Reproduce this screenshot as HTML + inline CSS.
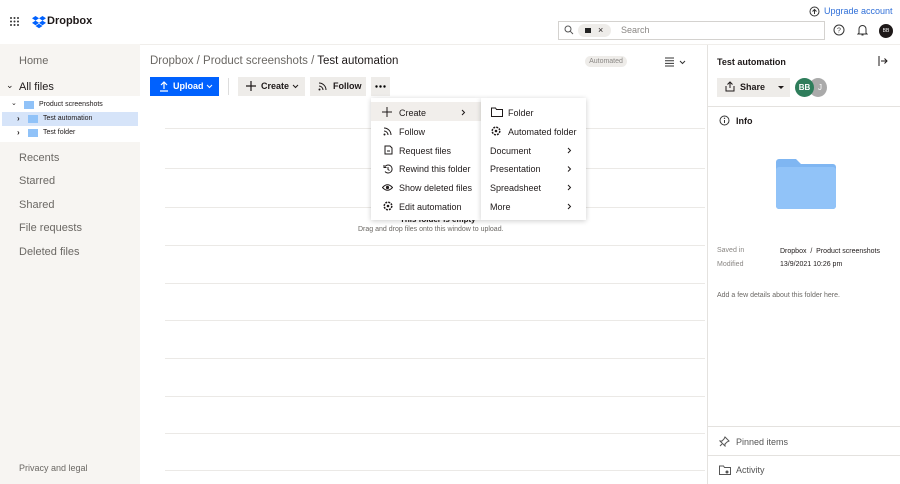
<!DOCTYPE html>
<html><head><meta charset="utf-8"><style>
*{box-sizing:border-box;margin:0;padding:0}
body{width:900px;height:484px;overflow:hidden;background:#fff;font-family:"Liberation Sans",sans-serif;color:#1e1919;position:relative}
.a{position:absolute}
.t{position:absolute;white-space:nowrap}
.line{position:absolute;left:165px;width:540px;height:1px;background:#ebe9e6}
.mi{position:absolute;font-size:9px;color:#1e1919;white-space:nowrap}
svg{position:absolute}
</style></head><body>
<!-- top bar -->
<svg style="left:10px;top:17px" width="9" height="9"><g fill="#333"><circle cx="1" cy="1" r="1"/><circle cx="4.5" cy="1" r="1"/><circle cx="8" cy="1" r="1"/><circle cx="1" cy="4.5" r="1"/><circle cx="4.5" cy="4.5" r="1"/><circle cx="8" cy="4.5" r="1"/><circle cx="1" cy="8" r="1"/><circle cx="4.5" cy="8" r="1"/><circle cx="8" cy="8" r="1"/></g></svg>
<svg style="left:32px;top:16px" width="14" height="13" viewBox="0 0 14 13"><path d="M3.5 0L0 2.3l3.5 2.3L7 2.3zM10.5 0L7 2.3l3.5 2.3L14 2.3zM0 6.9l3.5 2.3L7 6.9 3.5 4.6zM10.5 4.6L7 6.9l3.5 2.3L14 6.9zM3.5 10L7 12.3l3.5-2.3L7 7.7z" fill="#0061fe"/></svg>
<div class="t" style="left:47px;top:15px;font-size:11px;font-weight:bold">Dropbox</div>
<svg style="left:809px;top:6px" width="11" height="11"><circle cx="5.5" cy="5.5" r="4.5" fill="none" stroke="#333"/><path d="M5.5 8V3.5M3.5 5.5l2-2 2 2" fill="none" stroke="#333"/></svg>
<div class="t" style="left:824px;top:6px;font-size:9px;color:#2f6fd8">Upgrade account</div>
<div class="a" style="left:558px;top:21px;width:267px;height:19px;border:1px solid #d4d2cf"></div>
<svg style="left:564px;top:25px" width="10" height="10"><circle cx="4" cy="4" r="3" fill="none" stroke="#555"/><path d="M6.3 6.3L9 9" stroke="#555"/></svg>
<div class="a" style="left:578px;top:24px;width:33px;height:13px;border-radius:7px;background:#eeece9"></div>
<div class="a" style="left:585px;top:28px;width:6px;height:5px;background:#222"></div>
<div class="t" style="left:598px;top:25px;font-size:9px">×</div>
<div class="t" style="left:621px;top:25px;font-size:9px;color:#8a8784">Search</div>
<svg style="left:833px;top:24px" width="12" height="12"><circle cx="6" cy="6" r="5" fill="none" stroke="#333"/><text x="6" y="8.5" font-size="7" text-anchor="middle" font-family="Liberation Sans" fill="#333">?</text></svg>
<svg style="left:857px;top:24px" width="11" height="12"><path d="M2 9V5a3.5 3.5 0 0 1 7 0v4l1 1H1zM4.5 11h2" fill="none" stroke="#333"/></svg>
<div class="a" style="left:879px;top:24px;width:14px;height:14px;border-radius:50%;background:#1e1919;color:#fff;font-size:5px;text-align:center;line-height:14px">BB</div>
<!-- sidebar -->
<div class="a" style="left:0;top:44px;width:140px;height:440px;background:#f7f5f2"></div>
<div class="t" style="left:19px;top:55px;font-size:11px;color:#6b6864">Home</div>
<div class="t" style="left:6px;top:80px;font-size:9px">⌄</div>
<div class="t" style="left:19px;top:81px;font-size:11px">All files</div>
<div class="a" style="left:0;top:96px;width:140px;height:46px;background:#fff"></div>
<div class="a" style="left:2px;top:112px;width:136px;height:14px;background:#d6e4f9"></div>
<div class="t" style="left:11px;top:99px;font-size:7px">⌄</div>
<div class="a" style="left:24px;top:101px;width:10px;height:8px;background:#90c2f8"></div>
<div class="t" style="left:39px;top:101px;font-size:7px">Product screenshots</div>
<div class="t" style="left:17px;top:114px;font-size:8px;font-weight:bold">›</div>
<div class="a" style="left:28px;top:115px;width:10px;height:8px;background:#90c2f8"></div>
<div class="t" style="left:43px;top:115px;font-size:7px">Test automation</div>
<div class="t" style="left:17px;top:128px;font-size:8px;font-weight:bold">›</div>
<div class="a" style="left:28px;top:129px;width:10px;height:8px;background:#90c2f8"></div>
<div class="t" style="left:43px;top:129px;font-size:7px">Test folder</div>
<div class="t" style="left:19px;top:152px;font-size:11px;color:#6b6864">Recents</div>
<div class="t" style="left:19px;top:175px;font-size:11px;color:#6b6864">Starred</div>
<div class="t" style="left:19px;top:199px;font-size:11px;color:#6b6864">Shared</div>
<div class="t" style="left:19px;top:222px;font-size:11px;color:#6b6864">File requests</div>
<div class="t" style="left:19px;top:246px;font-size:11px;color:#6b6864">Deleted files</div>
<div class="t" style="left:19px;top:463px;font-size:9px;color:#6b6864">Privacy and legal</div>
<!-- main -->
<div class="t" style="left:150px;top:55px;font-size:11.5px;color:#6b6864">Dropbox / Product screenshots / <span style="color:#1e1919">Test automation</span></div>
<div class="a" style="left:585px;top:56px;width:42px;height:11px;border-radius:6px;background:#eeece9;font-size:7px;color:#8a8784;text-align:center;line-height:11px">Automated</div>
<svg style="left:665px;top:57px" width="22" height="10"><path d="M0 1h9M0 3.7h9M0 6.4h9M0 9h9M15 4l2.5 2.5L20 4" fill="none" stroke="#333"/></svg>
<div class="a" style="left:150px;top:77px;width:69px;height:19px;background:#0061fe"></div>
<svg style="left:159px;top:81px" width="10" height="11"><path d="M5 8V1M2 4l3-3 3 3M1 10h8" fill="none" stroke="#fff" stroke-width="1.2"/></svg>
<div class="t" style="left:173px;top:81px;font-size:9px;font-weight:bold;color:#fff">Upload</div>
<svg style="left:206px;top:84px" width="7" height="5"><path d="M1 1l2.5 2.5L6 1" fill="none" stroke="#fff"/></svg>
<div class="a" style="left:228px;top:78px;width:1px;height:17px;background:#ddd"></div>
<div class="a" style="left:238px;top:77px;width:67px;height:19px;background:#eeece9"></div>
<svg style="left:246px;top:81px" width="10" height="10"><path d="M5 0v10M0 5h10" stroke="#1e1919" stroke-width="1.2"/></svg>
<div class="t" style="left:261px;top:81px;font-size:9px;font-weight:bold">Create</div>
<svg style="left:292px;top:84px" width="7" height="5"><path d="M1 1l2.5 2.5L6 1" fill="none" stroke="#1e1919"/></svg>
<div class="a" style="left:310px;top:77px;width:56px;height:19px;background:#eeece9"></div>
<svg style="left:318px;top:82px" width="9" height="9"><path d="M1 1a7 7 0 0 1 7 7M1 4a4 4 0 0 1 4 4" fill="none" stroke="#1e1919"/><circle cx="1.5" cy="7.5" r="1" fill="#1e1919"/></svg>
<div class="t" style="left:333px;top:81px;font-size:9px;font-weight:bold">Follow</div>
<div class="a" style="left:371px;top:77px;width:19px;height:19px;background:#eeece9"></div>
<svg style="left:375px;top:85px" width="11" height="3"><circle cx="1.5" cy="1.5" r="1.2"/><circle cx="5.5" cy="1.5" r="1.2"/><circle cx="9.5" cy="1.5" r="1.2"/></svg>
<div class="line" style="top:128px"></div><div class="line" style="top:168px"></div><div class="line" style="top:207px"></div>
<div class="line" style="top:245px"></div><div class="line" style="top:283px"></div><div class="line" style="top:320px"></div>
<div class="line" style="top:358px"></div><div class="line" style="top:396px"></div><div class="line" style="top:433px"></div><div class="line" style="top:470px"></div>
<div class="t" style="left:400px;top:215px;font-size:8px;font-weight:bold">This folder is empty</div>
<div class="t" style="left:358px;top:226px;font-size:7px;color:#6b6864">Drag and drop files onto this window to upload.</div>
<!-- menus -->
<div class="a" style="left:371px;top:98px;width:110px;height:122px;background:#fff;box-shadow:0 1px 5px rgba(0,0,0,.2)"></div>
<div class="a" style="left:371px;top:102px;width:110px;height:19px;background:#f1eeeb"></div>
<div class="a" style="left:481px;top:98px;width:105px;height:122px;background:#fff;box-shadow:0 1px 5px rgba(0,0,0,.2)"></div>
<svg style="left:382px;top:107px" width="10" height="10"><path d="M5 0v10M0 5h10" stroke="#1e1919"/></svg>
<div class="mi" style="left:399px;top:108px">Create</div>
<svg style="left:461px;top:109px" width="5" height="7"><path d="M1 1l2.5 2.5L1 6" fill="none" stroke="#1e1919"/></svg>
<svg style="left:383px;top:127px" width="9" height="9"><path d="M1 1a7 7 0 0 1 7 7M1 4a4 4 0 0 1 4 4" fill="none" stroke="#1e1919"/><circle cx="1.5" cy="7.5" r="1" fill="#1e1919"/></svg>
<div class="mi" style="left:399px;top:127px">Follow</div>
<svg style="left:384px;top:145px" width="9" height="10"><path d="M1 1h5l2 2v6H1z" fill="none" stroke="#1e1919"/><path d="M3 6h3" stroke="#1e1919"/></svg>
<div class="mi" style="left:399px;top:146px">Request files</div>
<svg style="left:383px;top:164px" width="10" height="10"><path d="M2 2.5A4 4 0 1 1 2 7.5M1 1v2.5h2.5M5 3v2.5l1.5 1" fill="none" stroke="#1e1919"/></svg>
<div class="mi" style="left:399px;top:164px">Rewind this folder</div>
<svg style="left:382px;top:184px" width="11" height="7"><path d="M0.5 3.5Q5.5-2 10.5 3.5Q5.5 9 0.5 3.5z" fill="none" stroke="#1e1919"/><circle cx="5.5" cy="3.5" r="1.6" fill="#1e1919"/></svg>
<div class="mi" style="left:399px;top:183px">Show deleted files</div>
<svg style="left:383px;top:201px" width="10" height="10"><circle cx="5" cy="5" r="3.8" fill="none" stroke="#1e1919" stroke-width="1.5" stroke-dasharray="2 1"/><circle cx="5" cy="5" r="1.3" fill="#1e1919"/></svg>
<div class="mi" style="left:399px;top:202px">Edit automation</div>
<svg style="left:491px;top:107px" width="12" height="10"><path d="M0.5 1h4l1 1.5h6v7h-11z" fill="none" stroke="#1e1919"/></svg>
<div class="mi" style="left:508px;top:108px">Folder</div>
<svg style="left:491px;top:126px" width="10" height="10"><circle cx="5" cy="5" r="3.8" fill="none" stroke="#1e1919" stroke-width="1.5" stroke-dasharray="2 1"/><circle cx="5" cy="5" r="1.3" fill="#1e1919"/></svg>
<div class="mi" style="left:508px;top:127px">Automated folder</div>
<div class="mi" style="left:490px;top:146px">Document</div>
<div class="mi" style="left:490px;top:164px">Presentation</div>
<div class="mi" style="left:490px;top:183px">Spreadsheet</div>
<div class="mi" style="left:490px;top:202px">More</div>
<svg style="left:567px;top:147px" width="5" height="70"><path d="M1 1l2.5 2.5L1 6M1 19.5l2.5 2.5L1 24.5M1 38l2.5 2.5L1 43M1 57l2.5 2.5L1 62" fill="none" stroke="#1e1919"/></svg>
<!-- right panel -->
<div class="a" style="left:707px;top:44px;width:1px;height:440px;background:#e4e2df"></div>
<div class="a" style="left:140px;top:44px;width:760px;height:1px;background:#f0eeeb"></div>
<div class="t" style="left:717px;top:57px;font-size:9px;font-weight:bold">Test automation</div>
<svg style="left:878px;top:56px" width="10" height="10"><path d="M1 0v10M3 5h6M6.5 2.5L9 5 6.5 7.5" fill="none" stroke="#1e1919"/></svg>
<div class="a" style="left:717px;top:78px;width:73px;height:19px;background:#eeece9"></div>
<svg style="left:725px;top:81px" width="10" height="11"><path d="M5 7V1M2.5 3.5L5 1l2.5 2.5M1 5v5h8V5" fill="none" stroke="#1e1919"/></svg>
<div class="t" style="left:740px;top:82px;font-size:9px;font-weight:bold">Share</div>
<svg style="left:778px;top:86px" width="6" height="4"><path d="M0 0h6L3 3z" fill="#1e1919"/></svg>
<div class="a" style="left:809px;top:78px;width:18px;height:19px;border-radius:50%;background:#aaa;color:#fff;font-size:8px;text-align:center;line-height:19px;padding-left:4px">J</div>
<div class="a" style="left:795px;top:78px;width:19px;height:19px;border-radius:50%;background:#2e7d5b;color:#fff;font-size:8px;font-weight:bold;text-align:center;line-height:19px">BB</div>
<div class="a" style="left:708px;top:106px;width:192px;height:1px;background:#e4e2df"></div>
<svg style="left:719px;top:115px" width="11" height="11"><circle cx="5.5" cy="5.5" r="4.5" fill="none" stroke="#333"/><path d="M5.5 5v3" stroke="#333"/><circle cx="5.5" cy="3.3" r=".7" fill="#333"/></svg>
<div class="t" style="left:736px;top:116px;font-size:9px;font-weight:bold">Info</div>
<svg style="left:776px;top:159px" width="60" height="50"><path d="M0 3a3 3 0 0 1 3-3h17l5 5h32a3 3 0 0 1 3 3v39a3 3 0 0 1-3 3H3a3 3 0 0 1-3-3z" fill="#7fb6f2"/><rect x="0" y="8" width="60" height="42" rx="3" fill="#91c3f8"/></svg>
<div class="t" style="left:717px;top:247px;font-size:7px;color:#8a8784">Saved in</div>
<div class="t" style="left:717px;top:261px;font-size:7px;color:#8a8784">Modified</div>
<div class="t" style="left:780px;top:248px;font-size:7px">Dropbox &nbsp;/ &nbsp;Product screenshots</div>
<div class="t" style="left:780px;top:261px;font-size:7px">13/9/2021 10:26 pm</div>
<div class="t" style="left:717px;top:292px;font-size:7px;color:#6b6864">Add a few details about this folder here.</div>
<div class="a" style="left:708px;top:426px;width:192px;height:1px;background:#e4e2df"></div>
<svg style="left:719px;top:436px" width="11" height="11"><path d="M6 1l4 4-2 1-2 2 0 2-5-5h2l2-2z M3 8l-2 2" fill="none" stroke="#555"/></svg>
<div class="t" style="left:736px;top:437px;font-size:9px;color:#555">Pinned items</div>
<div class="a" style="left:708px;top:455px;width:192px;height:1px;background:#e4e2df"></div>
<svg style="left:719px;top:465px" width="12" height="10"><path d="M0.5 1h4l1 1.5h6v7h-11z" fill="none" stroke="#555"/><circle cx="8" cy="7" r="1.5" fill="#555"/></svg>
<div class="t" style="left:736px;top:465px;font-size:9px;color:#555">Activity</div>
</body></html>
